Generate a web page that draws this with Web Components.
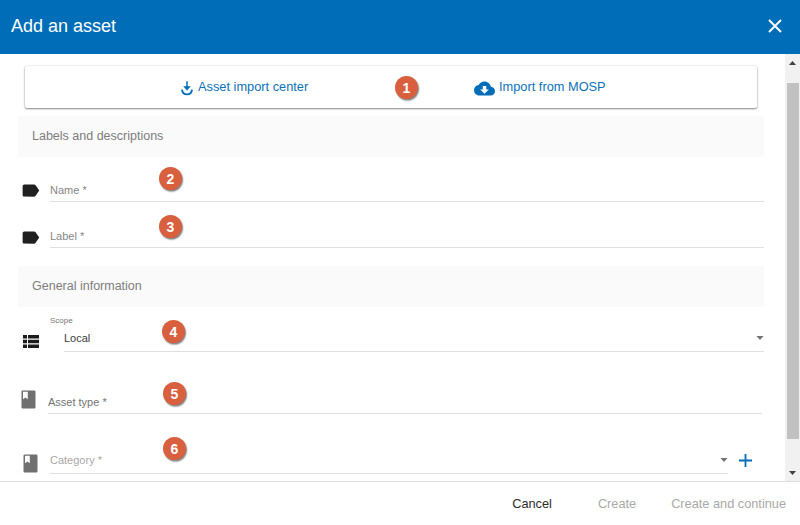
<!DOCTYPE html>
<html lang="en">
<head>
<meta charset="utf-8">
<title>Add an asset</title>
<style>
html,body{margin:0;height:100%;overflow:hidden;background:#fff;font-family:"Liberation Sans",Arial,sans-serif}
</style>
</head>
<body>
<asset-dialog></asset-dialog>
<script>
const define = (name, html, init) => customElements.define(name, class extends HTMLElement {
  connectedCallback() {
    if (this.shadowRoot) return;
    this.attachShadow({mode: 'open'}).innerHTML = html;
    if (init) init(this, this.shadowRoot);
  }
});

const icons = {
  import: '<svg width="12" height="15" viewBox="0 0 12 15" fill="none" stroke="#006db8" stroke-width="1.9"><path d="M6 .2V7" stroke-width="1.5"/><path d="M2.2 5.2h7.6L6 9.4z" fill="#006db8" stroke="none"/><path d="M1 8.6C1.7 15 10.3 15 11 8.6"/></svg>',
  cloud: '<svg width="21" height="21" viewBox="0 0 24 24" fill="#006db8"><path d="M19.35 10.04C18.67 6.59 15.64 4 12 4 9.11 4 6.6 5.64 5.35 8.04 2.34 8.36 0 10.91 0 14c0 3.31 2.69 6 6 6h13c2.76 0 5-2.24 5-5 0-2.64-2.05-4.78-4.65-4.96zM17 13l-5 5-5-5h3V9h4v4h3z"/></svg>',
  label: '<svg width="21" height="21" viewBox="0 0 24 24" fill="#202020"><path d="M17.63 5.84C17.27 5.33 16.67 5 16 5L5 5.01C3.9 5.01 3 5.9 3 7v10c0 1.1.9 1.99 2 1.99L16 19c.67 0 1.27-.33 1.63-.84L22 12l-4.37-6.16z"/></svg>',
  list: '<svg width="21" height="21" viewBox="0 0 21 21" fill="#1b1b1b"><path d="M3 4h4v3.6H3zM8 4h11v3.6H8zM3 8.7h4v3.6H3zM8 8.7h11v3.6H8zM3 13.4h4V17H3zM8 13.4h11V17H8z"/></svg>',
  book: '<svg width="21" height="21" viewBox="0 0 21 21" fill="#707070"><path fill-rule="evenodd" d="M4.7 1.5h11.6q1.2 0 1.2 1.2v15.6q0 1.2-1.2 1.2H4.7q-1.2 0-1.2-1.2V2.7q0-1.2 1.2-1.2zM5 2.8v7.5l2.4-1.7 2.4 1.7V2.8z"/></svg>',
  close: '<svg width="14" height="14" viewBox="0 0 14 14" stroke="#fff" stroke-width="1.9"><path d="M1 1l12 12M13 1L1 13"/></svg>',
  plus: '<svg width="13" height="13" viewBox="0 0 13 13" stroke="#006db8" stroke-width="1.8"><path d="M6.5 0v13M0 6.5h13"/></svg>',
  down: '<svg width="8" height="4" viewBox="0 0 8 4" fill="#757575"><path d="M.4 0h7.2L4 4z"/></svg>'
};

define('ui-icon', '<style>:host{display:inline-flex;flex:none}svg{display:block}</style>', (el, root) => {
  root.innerHTML += icons[el.getAttribute('name')];
});

define('dialog-header', `<style>
:host{display:flex;flex:none;box-sizing:border-box;height:54px;padding:0 18px 2px 11px;align-items:center;justify-content:space-between;background:#006db8;color:#fff;font-size:18px}
</style><slot></slot><ui-icon name="close"></ui-icon>`);

define('import-card', `<style>
:host{display:grid;grid-template-columns:449px 1fr;box-sizing:border-box;height:42px;margin:0 7px;border-radius:2px;background:#fff;box-shadow:0 1px 2px rgba(0,0,0,.45),0 0 2px rgba(0,0,0,.15);align-items:center}
</style><slot></slot>`);

define('import-link', `<style>
:host{display:flex;align-items:center;gap:5px;height:42px;color:#0a72b8;font-size:12.8px;white-space:nowrap}
span{padding-bottom:1px}ui-icon{padding-top:2px}
</style><ui-icon></ui-icon><span><slot></slot></span>`, (el, root) => {
  const icon = document.createElement('ui-icon');
  icon.setAttribute('name', el.getAttribute('icon'));
  root.querySelector('ui-icon').replaceWith(icon);
});

define('section-bar', `<style>
:host{display:flex;align-items:center;box-sizing:border-box;height:41px;padding:0 14px 1px;background:#fafafa;color:#7d7d7d;font-size:12.5px}
</style><slot></slot>`);

define('form-row', `<style>
:host{display:flex;flex:none;box-sizing:border-box;align-items:flex-end;font-size:11px;color:#868686}
.field{display:flex;justify-content:space-between;align-items:center;box-sizing:border-box;height:22px;padding-bottom:1px;border-bottom:1px solid #e0e0e0}
.icon{display:flex;width:30px;flex:none;padding-bottom:var(--lift,0px)}
.column{flex:1;display:flex;flex-direction:column}
small{font-size:8px;line-height:10px;color:#757575}
</style><div class="icon"></div><div class="column"><div class="field"><span><slot></slot></span></div></div><slot name="after"></slot>`, (el, root) => {
  root.querySelector('.icon').innerHTML = '<ui-icon name="' + el.getAttribute('icon') + '"></ui-icon>';
  if (el.hasAttribute('caption')) {
    const s = document.createElement('small');
    s.textContent = el.getAttribute('caption');
    root.querySelector('.column').prepend(s);
  }
  if (el.hasAttribute('select')) root.querySelector('.field').insertAdjacentHTML('beforeend', '<ui-icon name="down"></ui-icon>');
  const f = root.querySelector('.field');
  f.style.marginLeft = el.getAttribute('indent') || '';
  f.style.height = el.getAttribute('field-height') || '';
});

define('step-badge', `<style>
:host{position:absolute;width:23px;height:23px;border-radius:50%;background:#d9603f;color:#fff;display:flex;align-items:center;justify-content:center;font-weight:700;font-size:14px;line-height:1;box-shadow:1px 1.5px 1.5px rgba(0,0,0,.5)}
</style><slot></slot>`, el => {
  el.style.left = el.getAttribute('x') + 'px';
  el.style.top = el.getAttribute('y') + 'px';
});

define('scroll-track', `<style>
:host{display:flex;flex-direction:column;align-items:center;box-sizing:border-box;width:15px;flex:none;background:#f1f1f1;padding:7px 0 6px}
.thumb{width:12px;flex:none;height:356px;background:#c1c1c1;margin-top:18px;margin-bottom:auto}
svg{display:block;flex:none}
</style><svg width="7" height="4" viewBox="0 0 7 4" fill="#404040"><path d="M0 4h7L3.5 0z"/></svg><div class="thumb"></div><svg width="7" height="4" viewBox="0 0 7 4" fill="#404040"><path d="M0 0h7L3.5 4z"/></svg>`);

define('dialog-footer', `<style>
:host{display:flex;flex:none;height:44px;box-sizing:border-box;border-top:1px solid #dedede;align-items:center;justify-content:flex-end;padding:0 14px 0 0;font-size:12.75px;color:#a9a9a9}
</style><slot></slot>`);

define('text-button', `<style>
:host{display:block;white-space:nowrap}
:host([primary]){color:#2b2b2b}
</style><slot></slot>`);

define('asset-dialog', `<style>
:host{display:flex;flex-direction:column;height:525px;width:800px}
.body{flex:1;display:flex;min-height:0;position:relative}
.content{flex:1;display:flex;flex-direction:column;padding:12px 21px 0 18px;overflow:hidden}
import-card,section-bar{flex:none}
.add{display:flex;width:36px;padding-left:11px;box-sizing:border-box;padding-bottom:7px}
</style>
<dialog-header>Add an asset</dialog-header>
<div class="body">
 <div class="content">
  <import-card>
   <import-link icon="import" style="padding-left:156px">Asset import center</import-link>
   <import-link icon="cloud" style="gap:4px">Import from MOSP</import-link>
  </import-card>
  <section-bar style="margin-top:8px">Labels and descriptions</section-bar>
  <form-row icon="label" style="margin-top:23px;padding-left:2px;--lift:1px">Name *</form-row>
  <form-row icon="label" style="margin-top:24px;padding-left:2px">Label *</form-row>
  <section-bar style="margin-top:18px">General information</section-bar>
  <form-row icon="list" caption="Scope" select indent="14px" field-height="26px" style="color:#3c3c3c;margin-top:9px;padding-left:2px">Local</form-row>
  <form-row icon="book" style="margin:37px 2px 0 0;--lift:4px;color:#747474">Asset type *</form-row>
  <form-row icon="book" select field-height="27px" style="margin-top:33px;padding-left:2px;color:#a8a8a8">Category *<div class="add" slot="after"><ui-icon name="plus"></ui-icon></div></form-row>
 </div>
 <scroll-track></scroll-track>
 <step-badge x="395" y="22">1</step-badge>
 <step-badge x="159" y="113">2</step-badge>
 <step-badge x="159" y="161">3</step-badge>
 <step-badge x="162" y="266">4</step-badge>
 <step-badge x="163" y="328">5</step-badge>
 <step-badge x="163" y="383">6</step-badge>
</div>
<dialog-footer>
 <text-button primary>Cancel</text-button>
 <text-button style="margin-left:46px">Create</text-button>
 <text-button style="margin-left:35px">Create and continue</text-button>
</dialog-footer>`);
</script>
</body>
</html>
